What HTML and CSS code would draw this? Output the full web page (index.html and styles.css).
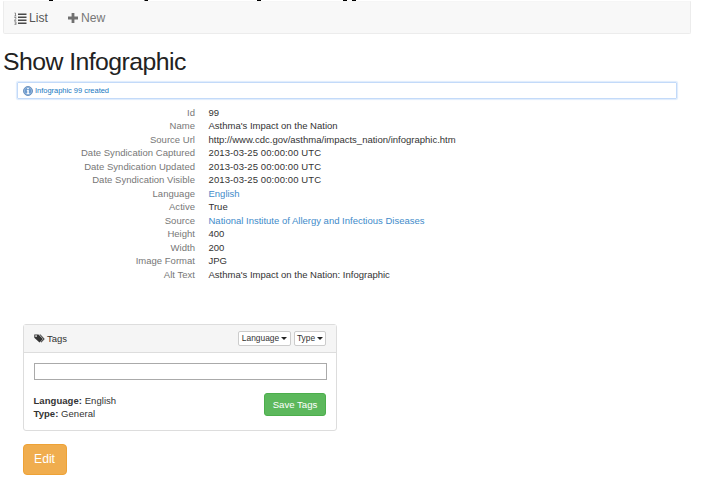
FILE: index.html
```html
<!DOCTYPE html>
<html lang="en">
<head>
<meta charset="utf-8">
<title>Show Infographic</title>
<link rel="stylesheet" href="styles.css">
</head>
<body>
<svg class="edge" width="710" height="1" viewBox="0 0 710 1" aria-hidden="true"><path d="M49 0h4v1h-4zM144.500 0h3.500v1h-3.500zM257 0h4v1h-4zM343 0h4v1h-4zM352 0h4v1h-4z"/></svg>
<nav class="navbar">
  <a class="nav-item nav-list"><svg class="icon-list" viewBox="0 0 13 13"><path d="M4 1.500h8.500v1.500H4zM4 4.500h8.500V6H4zM4 7.500h8.500V9H4zM4 10.500h8.500V12H4z"/><path class="nums" d="M.5 1h1v3M.3 4h2M.3 5.500h1.700v1.200L.3 8.300h2M.3 9.800h1.700v3H.3M.8 11.300h1"/></svg><span>List</span></a>
  <a class="nav-item nav-new"><svg class="icon-plus" viewBox="0 0 10 10"><path d="M3.600 0h2.800v3.600H10v2.800H6.400V10H3.600V6.400H0V3.600h3.600z"/></svg><span>New</span></a>
</nav>
<h1>Show Infographic</h1>
<div class="message"><svg viewBox="0 0 10 10"><circle cx="5" cy="5" r="4.500" fill="#6c9ace" stroke="#5a82b0" stroke-width=".8"/><circle cx="5" cy="5" r="3.700" fill="none" stroke="#a9c8e8" stroke-width=".6"/><path d="M4.200 2h1.600v1.300H4.200zM3.800 4h2v3.200h.7V8h-3v-.8h.8V4.800h-.5z" fill="#fff"/></svg><span>Infographic 99 created</span></div>
<dl class="details">
  <dt>Id</dt><dd>99</dd>
  <dt>Name</dt><dd>Asthma's Impact on the Nation</dd>
  <dt>Source Url</dt><dd>http://www.cdc.gov/asthma/impacts_nation/infographic.htm</dd>
  <dt>Date Syndication Captured</dt><dd class="date">2013-03-25 00:00:00 UTC</dd>
  <dt>Date Syndication Updated</dt><dd class="date">2013-03-25 00:00:00 UTC</dd>
  <dt>Date Syndication Visible</dt><dd class="date">2013-03-25 00:00:00 UTC</dd>
  <dt>Language</dt><dd><a>English</a></dd>
  <dt>Active</dt><dd>True</dd>
  <dt>Source</dt><dd><a>National Institute of Allergy and Infectious Diseases</a></dd>
  <dt>Height</dt><dd>400</dd>
  <dt>Width</dt><dd>200</dd>
  <dt>Image Format</dt><dd>JPG</dd>
  <dt>Alt Text</dt><dd>Asthma's Impact on the Nation: Infographic</dd>
</dl>
<section class="panel">
  <header class="panel-head">
    <svg class="icon-tags" viewBox="0 0 11 9"><path fill-rule="evenodd" d="M.3.500h4.200L9 5 5.500 8.500.3 3.800zM2 1.300a.8.8 0 1 0 .1 0z"/><path d="M5.400.500h1.100L10.700 5 7.400 8.500l-.7-.6L9.500 5z"/></svg>
    <span class="panel-title">Tags</span>
    <button class="small language">Language<i class="caret"></i></button>
    <button class="small type">Type<i class="caret"></i></button>
  </header>
  <div class="panel-body">
    <input type="text" aria-label="Tags">
    <div class="panel-row">
      <div class="summary"><b>Language:</b> English<br><b>Type:</b> General</div>
      <button class="save">Save Tags</button>
    </div>
  </div>
</section>
<button class="edit">Edit</button>
</body>
</html>
```
FILE: styles.css
```css
* { box-sizing: border-box; }
body {
  margin: 0;
  height: 480px;
  overflow: hidden;
  background: #fff;
  color: #333;
  font: 9.5px/13.5px "Liberation Sans", Arial, sans-serif;
}
button { font-family: inherit; padding: 0; display: flex; align-items: center; justify-content: center; }
.edge { display: block; }
.navbar {
  width: 688px;
  height: 33px;
  margin-left: 3px;
  padding: 2px 0 0 10px;
  display: flex;
  align-items: center;
  background: #f8f8f8;
  border: 1px solid #ececec;
  border-top-color: #f6f6f6;
  border-radius: 0 0 2px 2px;
  font-size: 12.15px;
}
.nav-item { display: flex; align-items: center; color: #777; }
.nav-item span { padding-top: 1px; }
.nav-list { width: 54px; color: #555; }
.icon-list { width: 13px; height: 13px; margin: 0 2px 1px 0; fill: #484848; }
.nums { fill: none; stroke: #666; stroke-width: .7; }
.icon-plus { width: 10px; height: 10px; margin: 0 3px 1px 0; fill: #707070; }
h1 {
  margin: 14px 0 0 3px;
  font-size: 24.8px;
  letter-spacing: -.55px;
  line-height: 27px;
  font-weight: 400;
  color: #222;
}
.message {
  width: 660px;
  height: 17px;
  margin: 7px 0 0 17px;
  padding-left: 5px;
  display: flex;
  align-items: center;
  border: 1px solid #c3daf9;
  box-shadow: 0 0 1px 1px #deebfc;
  border-radius: 1px;
  color: #1878bf;
  font-size: 7.5px;
  letter-spacing: -.03px;
}
.message svg { width: 10px; height: 10px; margin-right: 2px; }
.message span { padding-top: 1px; }
.details {
  margin: 7px 0 0;
  display: grid;
  grid-template-columns: 195px 1fr;
  column-gap: 13.500px;
  grid-auto-rows: 13.480px;
}
dt { text-align: right; color: #777; letter-spacing: .02px; }
dd { margin: 0; }
.date { letter-spacing: .1px; }
.details a { color: #428bca; }
.panel {
  width: 314px;
  height: 107px;
  margin: 42.760px 0 0 23px;
  border: 1px solid #ddd;
  border-radius: 3px;
}
.panel-head {
  height: 28px;
  padding: 0 10px;
  display: flex;
  align-items: center;
  background: #f5f5f5;
  border-bottom: 1px solid #ddd;
}
.icon-tags { width: 11px; height: 9px; margin-right: 2px; fill: #333; }
.panel-title { margin-right: auto; }
.small {
  height: 15px;
  margin-left: 3px;
  border: 1px solid #ccc;
  border-radius: 2px;
  background: #fff;
  color: #333;
  font-size: 8.4px;
}
.language { width: 53px; }
.type { width: 32px; }
.caret { margin-left: 2px; border: 3px solid transparent; border-top-color: #222; border-bottom: 0; }
.panel-body { padding: 10px 10px 10px 9.500px; }
.panel-body input {
  display: block;
  width: 293px;
  height: 17px;
  border: 1px solid #aaa;
  background: #fff;
}
.panel-row { display: flex; justify-content: space-between; padding-top: 13px; }
.summary { padding-top: .7px; letter-spacing: .05px; }
.save {
  width: 62px;
  height: 23px;
  border: 1px solid #4cae4c;
  border-radius: 3px;
  background: #5cb85c;
  color: #fff;
  font-size: 9.6px;
}
.edit {
  width: 44px;
  height: 31px;
  margin: 13px 0 0 22.500px;
  border: 1px solid #eea236;
  border-radius: 4px;
  background: #f0ad4e;
  color: #fff;
  font-size: 12.15px;
}
```
